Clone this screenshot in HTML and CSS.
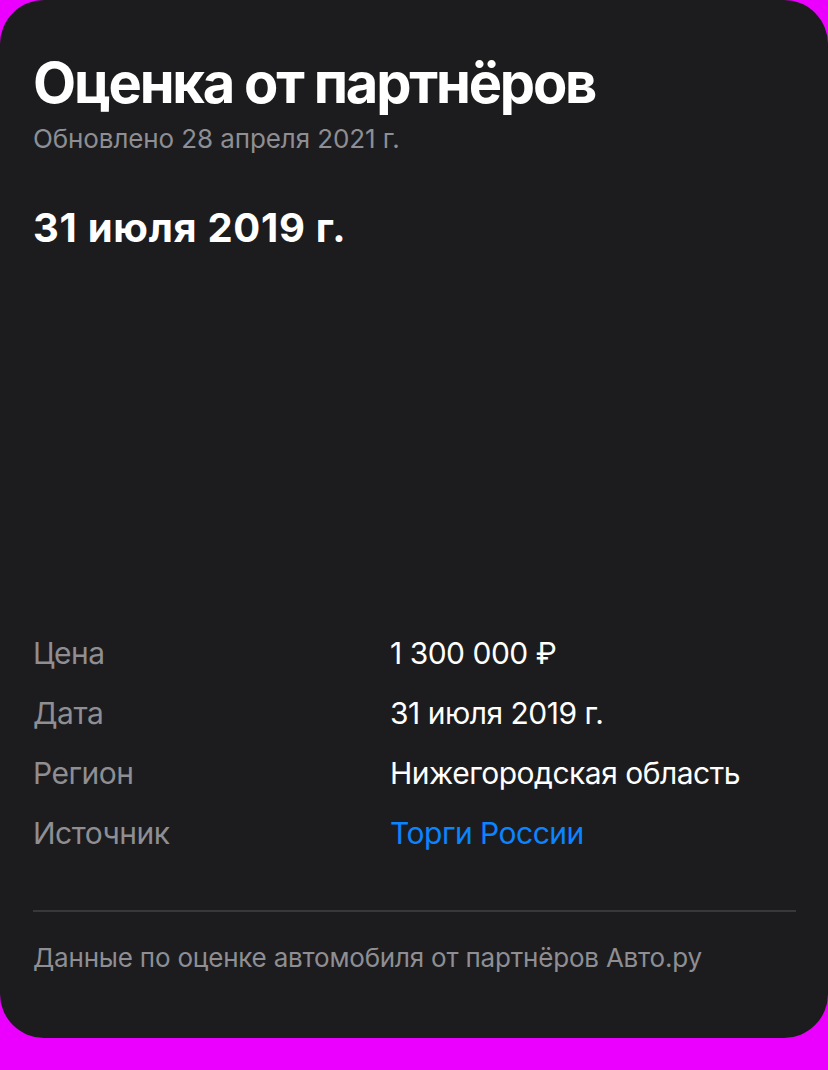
FILE: index.html
```html
<!DOCTYPE html>
<html lang="ru">
<head>
<meta charset="utf-8">
<title>Оценка от партнёров</title>
<link rel="stylesheet" href="styles.css">
</head>
<body>
<section class="card">
  <header class="head">
    <h1 class="title">Оценка от партнёров</h1>
    <p class="updated">Обновлено 28 апреля 2021 г.</p>
    <h2 class="date">31 июля 2019 г.</h2>
  </header>
  <div class="bottom">
    <dl class="details">
      <dt class="label">Цена</dt><dd class="value">1 300 000 ₽</dd>
      <dt class="label">Дата</dt><dd class="value">31 июля 2019 г.</dd>
      <dt class="label">Регион</dt><dd class="value">Нижегородская область</dd>
      <dt class="label">Источник</dt><dd class="value"><a class="link" href="#">Торги России</a></dd>
    </dl>
    <hr class="divider">
    <p class="note">Данные по оценке автомобиля от партнёров Авто.ру</p>
  </div>
</section>
</body>
</html>
```

FILE: styles.css
```css
* { box-sizing: border-box; }
html, body {
  margin: 0;
  padding: 0;
  background: #eb00ff;
}
body {
  font-family: "Inter", "Noto Sans", sans-serif;
  color: #ffffff;
}
.card {
  height: 1038px;
  background: #1c1c1e;
  border-radius: 44px;
  padding: 49px 32px 64px 33px;
  display: flex;
  flex-direction: column;
}
.title {
  margin: 0;
  font-size: 56px;
  line-height: 68px;
  font-weight: 700;
  letter-spacing: -2.2px;
}
.updated {
  margin: 6px 0 0;
  font-size: 26px;
  line-height: 32px;
  color: #8e8e93;
  letter-spacing: -0.1px;
}
.date {
  margin: 49px 0 0;
  font-size: 40px;
  line-height: 48px;
  font-weight: 700;
  letter-spacing: 0.7px;
}
.bottom {
  margin-top: auto;
}
.details {
  margin: 0;
  display: grid;
  grid-template-columns: 357px 1fr;
  font-size: 30px;
  line-height: 60px;
  letter-spacing: -0.5px;
}
.label {
  color: #8e8e93;
}
.value {
  margin: 0;
  color: #ffffff;
}
.link {
  color: #0a84ff;
  text-decoration: none;
}
.divider {
  margin: 47px 0 0;
  border: 0;
  height: 2px;
  background: #38383a;
}
.note {
  margin: 30px 0 0;
  font-size: 26px;
  line-height: 32px;
  color: #8e8e93;
  letter-spacing: -0.2px;
}
```
